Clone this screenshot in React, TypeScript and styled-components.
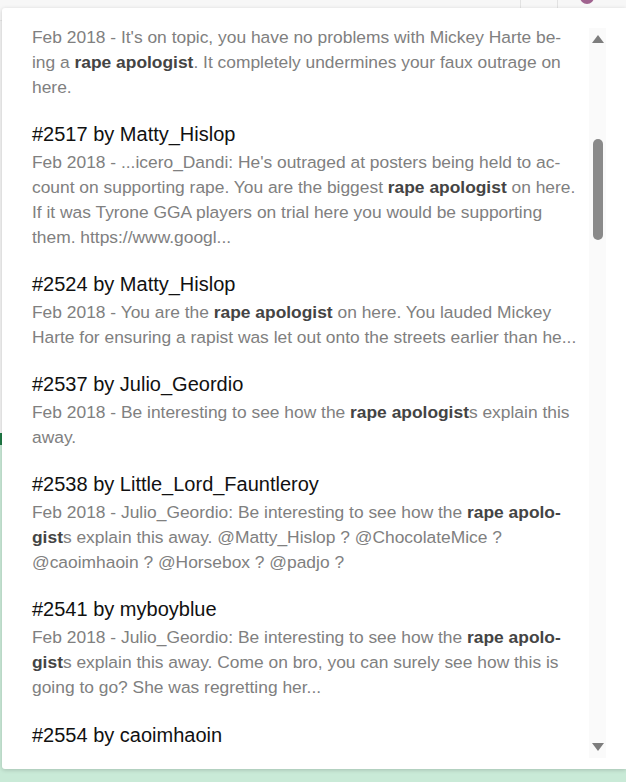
import React from "react"
import styled, { createGlobalStyle } from "styled-components"

const GlobalStyle = createGlobalStyle`
  html, body {
    margin: 0;
    padding: 0;
    overflow: hidden;
  }

  body {
    font-family: "Liberation Sans", Arial, sans-serif;
  }
`

const Page = styled.div`
  position: relative;
  width: 626px;
  height: 782px;
  overflow: hidden;
  display: flex;
  flex-direction: column;
  background: #ffffff;
`

const TopBar = styled.header`
  height: 20px;
  display: flex;
  justify-content: flex-end;
  background: #f7f7f7;
  border-bottom: 1px solid #e6e6e6;
`

const TopBarCell = styled.div<{ $width: number }>`
  width: ${(p) => p.$width}px;
  border-left: 1px solid #e2e2e2;
`

const Avatar = styled.div`
  width: 14px;
  height: 14px;
  margin: -10px 0 0 22px;
  border-radius: 50%;
  background: #a0638f;
`

const PageBody = styled.div`
  height: 412px;
  background: #f3f3f3;
`

const GreenRule = styled.div`
  height: 12px;
  background: #1f7a45;
`

const GreenArea = styled.div`
  flex: 1;
  background: #c9ead7;
`

const Dropdown = styled.div`
  position: absolute;
  top: 8px;
  left: 2px;
  right: 0;
  height: 761px;
  display: flex;
  background: #ffffff;
  border-radius: 3px 0 0 3px;
  box-shadow: 0 1px 4px rgba(0, 0, 0, 0.18);
`

const ResultList = styled.div`
  flex: 1;
  overflow: hidden;
  margin-bottom: 20px;
  padding: 17px 0 0 30px;
  display: flex;
  flex-direction: column;
  gap: 23.1px;
`

const Result = styled.article`
  display: flex;
  flex-direction: column;
  gap: 5px;
`

const Title = styled.h4`
  margin: 0;
  font-size: 20px;
  line-height: 22px;
  font-weight: 400;
  color: #111111;
  white-space: nowrap;
`

const Snippet = styled.p`
  margin: 0;
  font-size: 17.4px;
  line-height: 25px;
  color: #808080;
  white-space: nowrap;
`

const Term = styled.b`
  font-weight: 700;
  color: #444444;
`

const Scrollbar = styled.div`
  width: 17px;
  margin: 20px 20px 11px 0;
  display: flex;
  flex-direction: column;
  align-items: center;
  background: #fafafa;
`

const Arrow = styled.div<{ $down?: boolean }>`
  width: 0;
  height: 0;
  margin: ${(p) => (p.$down ? "0 0 7px" : "7px 0 0")};
  border-left: 6px solid transparent;
  border-right: 6px solid transparent;
  ${(p) =>
    p.$down
      ? "border-top: 8px solid #7d7d7d;"
      : "border-bottom: 8px solid #7d7d7d;"}
`

const Track = styled.div`
  flex: 1;
  width: 100%;
  display: flex;
  justify-content: center;
  padding-top: 96px;
`

const Thumb = styled.div`
  width: 10px;
  height: 101px;
  border-radius: 5px;
  background: #8a8a8a;
`

type Item = {
  title?: string
  snippet?: React.ReactNode
}

const items: Item[] = [
  {
    snippet: (
      <>
        Feb 2018 - It's on topic, you have no problems with Mickey Harte be-
        <br />
        ing a <Term>rape apologist</Term>. It completely undermines your faux outrage on
        <br />
        here.
      </>
    ),
  },
  {
    title: "#2517 by Matty_Hislop",
    snippet: (
      <>
        Feb 2018 - ...icero_Dandi: He's outraged at posters being held to ac-
        <br />
        count on supporting rape. You are the biggest <Term>rape apologist</Term> on here.
        <br />
        If it was Tyrone GGA players on trial here you would be supporting
        <br />
        them. https://www.googl...
      </>
    ),
  },
  {
    title: "#2524 by Matty_Hislop",
    snippet: (
      <>
        Feb 2018 - You are the <Term>rape apologist</Term> on here. You lauded Mickey
        <br />
        Harte for ensuring a rapist was let out onto the streets earlier than he...
      </>
    ),
  },
  {
    title: "#2537 by Julio_Geordio",
    snippet: (
      <>
        Feb 2018 - Be interesting to see how the <Term>rape apologist</Term>s explain this
        <br />
        away.
      </>
    ),
  },
  {
    title: "#2538 by Little_Lord_Fauntleroy",
    snippet: (
      <>
        Feb 2018 - Julio_Geordio: Be interesting to see how the <Term>rape apolo-</Term>
        <br />
        <Term>gist</Term>s explain this away. @Matty_Hislop ? @ChocolateMice ?
        <br />
        @caoimhaoin ? @Horsebox ? @padjo ?
      </>
    ),
  },
  {
    title: "#2541 by myboyblue",
    snippet: (
      <>
        Feb 2018 - Julio_Geordio: Be interesting to see how the <Term>rape apolo-</Term>
        <br />
        <Term>gist</Term>s explain this away. Come on bro, you can surely see how this is
        <br />
        going to go? She was regretting her...
      </>
    ),
  },
  {
    title: "#2554 by caoimhaoin",
  },
]

export default function App() {
  return (
    <Page>
      <GlobalStyle />
      <TopBar>
        <TopBarCell $width={36} />
        <TopBarCell $width={68}>
          <Avatar />
        </TopBarCell>
      </TopBar>
      <PageBody />
      <GreenRule />
      <GreenArea />

      <Dropdown>
        <ResultList>
          {items.map((item, i) => (
            <Result key={i}>
              {item.title && <Title>{item.title}</Title>}
              {item.snippet && <Snippet>{item.snippet}</Snippet>}
            </Result>
          ))}
        </ResultList>
        <Scrollbar>
          <Arrow />
          <Track>
            <Thumb />
          </Track>
          <Arrow $down />
        </Scrollbar>
      </Dropdown>
    </Page>
  )
}
